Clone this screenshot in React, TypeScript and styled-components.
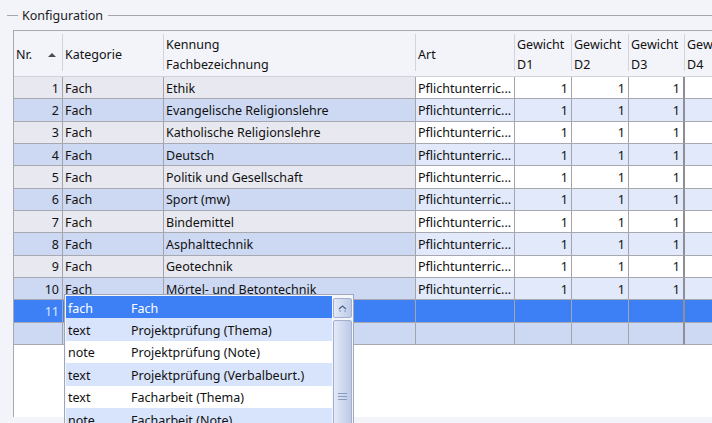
import * as React from 'react';
import styled, { createGlobalStyle } from 'styled-components';

const GlobalStyle = createGlobalStyle`
  html, body {
    margin: 0;
    padding: 0;
    background: #f3f3fa;
    overflow: hidden;
  }
  body {
    font-family: 'Noto Sans', 'Liberation Sans', sans-serif;
    font-size: 12.5px;
    color: #111;
  }
`;

const COLS = '49px 101px 252px 99px 57px 57px 56px 60px';
const ROW_H = 22.33;

type RowKind = 'odd' | 'even' | 'selected' | 'new';

const cellBg = (kind: RowKind, editable: boolean) => {
  switch (kind) {
    case 'selected':
      return '#3d80f6';
    case 'new':
      return '#cdd9f3';
    case 'even':
      return editable ? '#e1e9fa' : '#cdd9f3';
    default:
      return editable ? '#ffffff' : '#e8e8f0';
  }
};

const Page = styled.div`
  width: 712px;
  height: 423px;
  overflow: hidden;
`;

const Legend = styled.div`
  display: flex;
  align-items: center;
  height: 30px;
  padding-top: 1px;
  box-sizing: border-box;
`;

const LegendLine = styled.div<{ $grow?: boolean }>`
  height: 1px;
  background: #a6a6ae;
  ${(p) => (p.$grow ? 'flex: 1;' : 'width: 11px; margin-left: 7px;')}
`;

const LegendTitle = styled.span`
  padding: 0 5px 0 4px;
  color: #1a1a1a;
`;

const GridBox = styled.div`
  position: relative;
  margin-left: 13px;
  height: 386px;
  background: #ffffff;
  border-top: 1px solid #a8a8b0;
  border-left: 1px solid #a8a8b0;
`;

const HeaderRow = styled.div`
  display: grid;
  grid-template-columns: ${COLS};
  height: 46px;
  box-sizing: border-box;
  background: #f3f3fa;
  border-bottom: 1px solid #d2d2da;
`;

const HeaderCell = styled.div`
  position: relative;
  display: flex;
  flex-direction: column;
  justify-content: center;
  padding: 2px 2px 0;
  line-height: 20px;
  white-space: nowrap;
  overflow: hidden;
  &::after {
    content: '';
    position: absolute;
    right: 0;
    top: 3px;
    bottom: 5px;
    width: 1px;
    background: #d3d3dc;
  }
`;

const HeaderInline = styled.div`
  display: flex;
  align-items: center;
  justify-content: space-between;
  padding-right: 5px;
`;

const SortArrow = styled.span`
  width: 0;
  height: 0;
  border-left: 4px solid transparent;
  border-right: 4px solid transparent;
  border-bottom: 4px solid #4a4a52;
`;

const Row = styled.div`
  display: grid;
  grid-template-columns: ${COLS};
  height: ${ROW_H}px;
`;

const Cell = styled.div<{ $kind: RowKind; $editable?: boolean; $right?: boolean; $split?: boolean }>`
  box-sizing: border-box;
  display: flex;
  align-items: center;
  justify-content: ${(p) => (p.$right ? 'flex-end' : 'flex-start')};
  padding: ${(p) => (p.$right ? '1px 3px 0 2px' : '1px 2px 0')};
  background: ${(p) => cellBg(p.$kind, !!p.$editable)};
  border-right: ${(p) => (p.$split ? '2px solid #8e8e96' : '1px solid #a4a4ac')};
  border-bottom: 1px solid #a8a8b0;
  white-space: nowrap;
  overflow: hidden;
  color: ${(p) => (p.$kind === 'selected' ? '#d6e4ff' : '#111')};
`;

const Popup = styled.div`
  position: absolute;
  left: 50px;
  top: 263px;
  width: 290px;
  height: 140px;
  box-sizing: border-box;
  display: flex;
  background: #f4f6fb;
  border: 1px solid #9ea6ba;
  padding: 1px 1px 0 1px;
  gap: 1px;
  overflow: hidden;
`;

const EditorEdge = styled.div`
  position: absolute;
  left: 72px;
  top: 263px;
  width: 22px;
  height: 1px;
  background: #1a1a1a;
`;

const List = styled.div`
  width: 266px;
  display: flex;
  flex-direction: column;
`;

const Item = styled.div<{ $kind: RowKind }>`
  display: flex;
  align-items: center;
  box-sizing: border-box;
  height: 22.4px;
  padding-top: 2px;
  flex-shrink: 0;
  background: ${(p) =>
    p.$kind === 'selected' ? '#3d80f6' : p.$kind === 'even' ? '#d8e4fb' : '#ffffff'};
  color: ${(p) => (p.$kind === 'selected' ? '#ffffff' : '#111')};
  white-space: nowrap;
`;

const ItemCode = styled.span`
  width: 63px;
  padding-left: 2px;
`;

const ScrollTrack = styled.div`
  width: 19px;
  display: flex;
  flex-direction: column;
  gap: 2px;
  padding-top: 2px;
`;

const ScrollPart = styled.div<{ $thumb?: boolean }>`
  box-sizing: border-box;
  height: ${(p) => (p.$thumb ? '140px' : '20px')};
  flex-shrink: 0;
  border: 1px solid #a3afcd;
  border-radius: 2px;
  background: linear-gradient(to right, #e3e9f7, #bccae8);
  display: flex;
  justify-content: center;
  align-items: ${(p) => (p.$thumb ? 'flex-start' : 'center')};
  padding-top: ${(p) => (p.$thumb ? '71px' : '0')};
`;

const UpArrow = () => (
  <svg width="11" height="8" viewBox="0 0 11 8">
    <polyline points="2,5 5.5,2 9,5" fill="none" stroke="#4b5f86" strokeWidth="1.2" />
    <line x1="2" y1="7" x2="4" y2="7" stroke="#8797ba" strokeWidth="1" />
    <line x1="7" y1="7" x2="9" y2="7" stroke="#8797ba" strokeWidth="1" />
  </svg>
);

const Grip = () => (
  <svg width="9" height="8" viewBox="0 0 9 8">
    <line x1="0" y1="1.5" x2="9" y2="1.5" stroke="#8a9ac0" />
    <line x1="0" y1="4.5" x2="9" y2="4.5" stroke="#8a9ac0" />
    <line x1="0" y1="7.5" x2="9" y2="7.5" stroke="#8a9ac0" />
  </svg>
);

const subjects = [
  'Ethik',
  'Evangelische Religionslehre',
  'Katholische Religionslehre',
  'Deutsch',
  'Politik und Gesellschaft',
  'Sport (mw)',
  'Bindemittel',
  'Asphalttechnik',
  'Geotechnik',
  'Mörtel- und Betontechnik',
];

const options: [string, string][] = [
  ['fach', 'Fach'],
  ['text', 'Projektprüfung (Thema)'],
  ['note', 'Projektprüfung (Note)'],
  ['text', 'Projektprüfung (Verbalbeurt.)'],
  ['text', 'Facharbeit (Thema)'],
  ['note', 'Facharbeit (Note)'],
];

const DataRow = ({ kind, nr, name }: { kind: RowKind; nr?: number; name?: string }) => {
  const filled = name !== undefined;
  return (
    <Row>
      <Cell $kind={kind} $right>{nr}</Cell>
      <Cell $kind={kind}>{filled ? 'Fach' : ''}</Cell>
      <Cell $kind={kind}>{name}</Cell>
      <Cell $kind={kind} $editable>{filled ? 'Pflichtunterric...' : ''}</Cell>
      <Cell $kind={kind} $editable $right>{filled ? 1 : ''}</Cell>
      <Cell $kind={kind} $editable $right>{filled ? 1 : ''}</Cell>
      <Cell $kind={kind} $editable $right $split>{filled ? 1 : ''}</Cell>
      <Cell $kind={kind} $editable />
    </Row>
  );
};

export default function App() {
  return (
    <Page>
      <GlobalStyle />
      <Legend>
        <LegendLine />
        <LegendTitle>Konfiguration</LegendTitle>
        <LegendLine $grow />
      </Legend>
      <GridBox>
        <HeaderRow>
          <HeaderCell>
            <HeaderInline>
              <span>Nr.</span>
              <SortArrow />
            </HeaderInline>
          </HeaderCell>
          <HeaderCell>Kategorie</HeaderCell>
          <HeaderCell>
            <span>Kennung</span>
            <span>Fachbezeichnung</span>
          </HeaderCell>
          <HeaderCell>Art</HeaderCell>
          {['D1', 'D2', 'D3', 'D4'].map((d) => (
            <HeaderCell key={d}>
              <span>Gewicht</span>
              <span>{d}</span>
            </HeaderCell>
          ))}
        </HeaderRow>
        {subjects.map((s, i) => (
          <DataRow key={s} kind={i % 2 === 0 ? 'odd' : 'even'} nr={i + 1} name={s} />
        ))}
        <DataRow kind="selected" nr={11} />
        <DataRow kind="new" />
        <EditorEdge />
        <Popup>
          <List>
            {options.map(([code, label], i) => (
              <Item key={i} $kind={i === 0 ? 'selected' : i % 2 === 1 ? 'even' : 'odd'}>
                <ItemCode>{code}</ItemCode>
                <span>{label}</span>
              </Item>
            ))}
          </List>
          <ScrollTrack>
            <ScrollPart>
              <UpArrow />
            </ScrollPart>
            <ScrollPart $thumb>
              <Grip />
            </ScrollPart>
          </ScrollTrack>
        </Popup>
      </GridBox>
    </Page>
  );
}
